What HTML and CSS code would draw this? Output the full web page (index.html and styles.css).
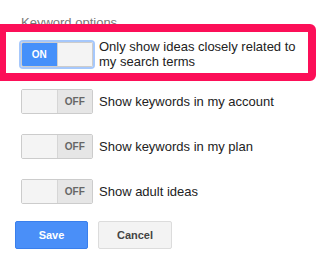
FILE: index.html
```html
<!DOCTYPE html>
<html lang="en">
<head>
    <meta charset="UTF-8">
    <title>Keyword options</title>
    <link rel="stylesheet" href="styles.css">
</head>
<body>
    <div class="panel">
        <div class="heading">Keyword options</div>

        <div class="option">
            <div class="toggle on focused">
                <span class="state">ON</span>
                <span class="knob"></span>
            </div>
            <div class="label">Only show ideas closely related to<br>my search terms</div>
        </div>

        <div class="option">
            <div class="toggle">
                <span class="knob"></span>
                <span class="state">OFF</span>
            </div>
            <div class="label">Show keywords in my account</div>
        </div>

        <div class="option">
            <div class="toggle">
                <span class="knob"></span>
                <span class="state">OFF</span>
            </div>
            <div class="label">Show keywords in my plan</div>
        </div>

        <div class="option">
            <div class="toggle">
                <span class="knob"></span>
                <span class="state">OFF</span>
            </div>
            <div class="label">Show adult ideas</div>
        </div>

        <div class="actions">
            <button class="btn btn-save">Save</button>
            <button class="btn btn-cancel">Cancel</button>
        </div>

        <!-- annotation box drawn over the first option -->
        <div class="highlight"></div>
    </div>
</body>
</html>
```

FILE: styles.css
```css
body {
    margin: 0;
    background: #fff;
    font-family: "Liberation Sans", Arial, sans-serif;
    font-size: 13px;
    color: #222;
}

.panel {
    position: relative;
    padding: 15px 0 0 21px;
}

.heading {
    color: #777;
    line-height: 15px;
    margin-bottom: 9px;
}

.option {
    display: flex;
    align-items: center;
    margin-bottom: 20px;
}

.label {
    line-height: 15px;
    margin-left: 6px;
}

.toggle {
    display: flex;
    width: 72px;
    height: 25px;
    box-sizing: border-box;
    border: 1px solid #ccc;
    border-radius: 2px;
    overflow: hidden;
    flex-shrink: 0;
}

.toggle.focused {
    box-shadow: 0 0 0 2px #a6c8fc;
}

.knob {
    flex: 1;
    background: #f4f4f4;
}

.state {
    flex: 1;
    display: flex;
    align-items: center;
    justify-content: center;
    font-size: 10px;
    font-weight: bold;
    background: #e6e6e6;
    color: #666;
    border-left: 1px solid #d6d6d6;
}

.toggle.on .state {
    background: #4590fa;
    color: #fff;
    border-left: none;
}

.toggle.on .knob {
    border-left: 1px solid #d0d0d0;
}

.actions {
    display: flex;
    gap: 10px;
    margin-top: -3px;
    margin-left: -6px;
}

.btn {
    height: 28px;
    border-radius: 2px;
    font-family: "Liberation Sans", Arial, sans-serif;
    font-size: 11px;
    font-weight: bold;
    padding: 0;
    cursor: pointer;
}

.btn-save {
    width: 73px;
    background: #4a8ff8;
    border: 1px solid #3a7fec;
    color: #fff;
}

.btn-cancel {
    width: 74px;
    background: #f3f3f3;
    border: 1px solid #dcdcdc;
    color: #444;
}

.highlight {
    position: absolute;
    left: -2px;
    top: 24px;
    width: 318px;
    height: 57px;
    box-sizing: border-box;
    border: 8px solid #fc0f58;
    border-radius: 2px 6px 6px 2px;
}
```
